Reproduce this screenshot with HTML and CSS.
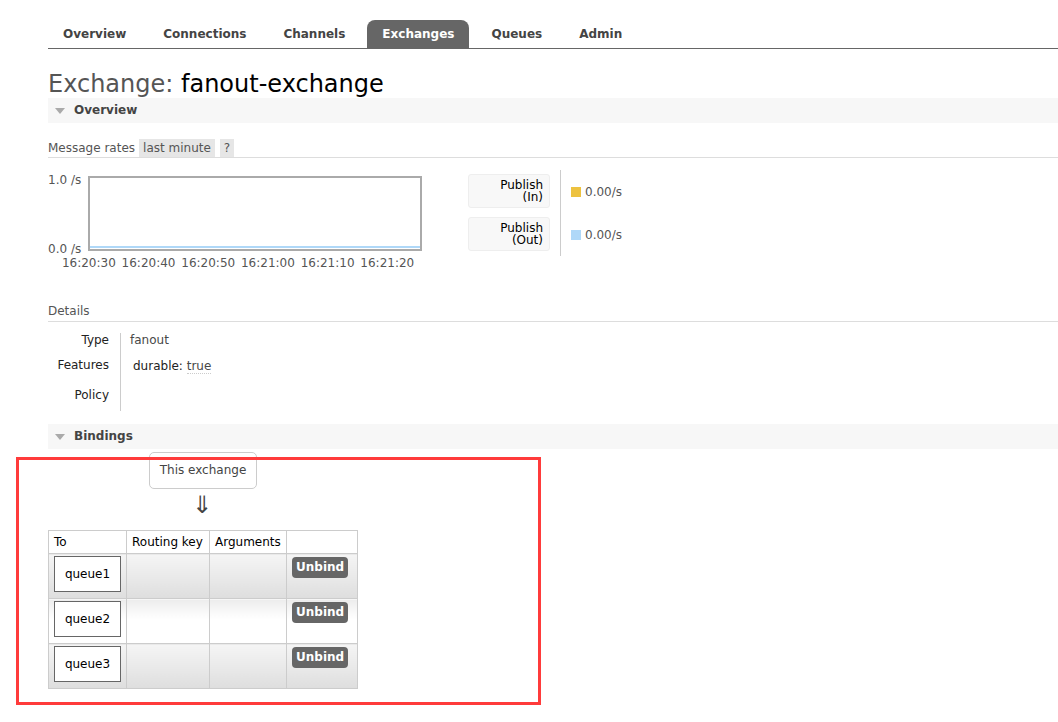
FILE: index.html
```html
<!DOCTYPE html>
<html>
<head>
<meta charset="utf-8">
<link rel="stylesheet" href="styles.css">
</head>
<body>
<div class="page">
  <ul class="tabs">
    <li class="tab">Overview</li>
    <li class="tab">Connections</li>
    <li class="tab">Channels</li>
    <li class="tab active">Exchanges</li>
    <li class="tab">Queues</li>
    <li class="tab">Admin</li>
  </ul>

  <h1 class="title"><span class="title-label">Exchange:</span> <b class="title-name">fanout-exchange</b></h1>

  <div class="section-head"><span class="tri"></span>Overview</div>

  <div class="rates-bar">
    <span class="rates-label">Message rates</span>
    <span class="pill">last minute</span>
    <span class="pill q">?</span>
  </div>

  <div class="chart-row">
    <div class="chart">
      <div class="chart-main">
        <div class="yaxis"><span>1.0 /s</span><span>0.0 /s</span></div>
        <div class="plot"><div class="plot-line"></div></div>
      </div>
      <div class="xaxis">
        <span>16:20:30</span><span>16:20:40</span><span>16:20:50</span><span>16:21:00</span><span>16:21:10</span><span>16:21:20</span>
      </div>
    </div>
    <div class="legend">
      <div class="legend-keys">
        <div class="legend-key">Publish<br>(In)</div>
        <div class="legend-key">Publish<br>(Out)</div>
      </div>
      <div class="legend-vals">
        <div class="legend-val"><span class="swatch in"></span>0.00/s</div>
        <div class="legend-val"><span class="swatch out"></span>0.00/s</div>
      </div>
    </div>
  </div>

  <div class="sub-head">Details</div>
  <table class="facts">
    <tr class="r1"><th>Type</th><td>fanout</td></tr>
    <tr class="r2"><th>Features</th><td><span class="feat-key">durable:</span> <span class="feat-val">true</span></td></tr>
    <tr class="r3"><th>Policy</th><td></td></tr>
  </table>

  <div class="section-head"><span class="tri"></span>Bindings</div>

  <div class="bindings">
    <div class="this-ex">This exchange</div>
    <div class="arrow">⇓</div>
    <table class="list">
      <thead>
        <tr><th class="c1">To</th><th class="c2">Routing key</th><th class="c3">Arguments</th><th class="c4"></th></tr>
      </thead>
      <tbody>
        <tr class="alt1"><td><div class="qbox">queue1</div></td><td></td><td></td><td><span class="btn">Unbind</span></td></tr>
        <tr class="alt2"><td><div class="qbox">queue2</div></td><td></td><td></td><td><span class="btn">Unbind</span></td></tr>
        <tr class="alt1"><td><div class="qbox">queue3</div></td><td></td><td></td><td><span class="btn">Unbind</span></td></tr>
      </tbody>
    </table>
  </div>
</div>
<div class="annot"></div>
</body>
</html>
```

FILE: styles.css
```css
html, body {
  margin: 0;
  padding: 0;
  background: #fff;
}
body {
  font-family: "DejaVu Sans", Verdana, sans-serif;
  font-size: 12px;
  color: #484848;
  overflow: hidden;
  width: 1058px;
  height: 722px;
}
.page {
  padding-left: 48px;
}
.tabs {
  list-style: none;
  margin: 20px 0 0 0;
  padding: 0;
  display: flex;
  gap: 7px;
  border-bottom: 1px solid #666;
}
.tab {
  padding: 0 15px;
  height: 28px;
  line-height: 28px;
  font-weight: bold;
  color: #444;
}
.tab.active {
  background: #666;
  color: #fff;
  border-radius: 8px 8px 0 0;
}
.title {
  margin: 21px 0 0 0;
  font-size: 24px;
  font-weight: normal;
  line-height: 28px;
  height: 28px;
}
.title-label { color: #555; }
.title-name { font-weight: normal; color: #000; }

.section-head {
  background: #f7f7f7;
  height: 25px;
  line-height: 25px;
  font-weight: bold;
  color: #444;
  display: flex;
  align-items: center;
}
.tri {
  width: 0;
  height: 0;
  border-left: 5px solid transparent;
  border-right: 5px solid transparent;
  border-top: 6px solid #aaa;
  margin: 1px 9px 0 7px;
}
.rates-bar {
  margin-top: 16px;
  height: 18px;
  line-height: 19px;
  border-bottom: 1px solid #ddd;
  display: flex;
  color: #555;
}
.rates-label { margin-right: 4px; }
.pill {
  background: #e6e6e6;
  padding: 0 4px;
  margin-right: 5px;
}
.chart-row {
  margin-top: 12px;
  display: flex;
  align-items: flex-start;
}
.chart {
  width: 374px;
}
.chart-main {
  display: flex;
  align-items: flex-start;
  padding-top: 6px;
}
.yaxis {
  width: 40px;
  height: 83px;
  margin-top: -3px;
  display: flex;
  flex-direction: column;
  justify-content: space-between;
  line-height: 14px;
  color: #555;
}
.plot {
  width: 330px;
  height: 71px;
  border: 2px solid #aaa;
  display: flex;
  align-items: flex-end;
}
.plot-line {
  width: 100%;
  height: 2px;
  background: #afd8f8;
  margin-bottom: 1px;
}
.xaxis {
  display: flex;
  margin-left: 11px;
  margin-top: 0;
  line-height: 14px;
  color: #555;
}
.xaxis span {
  width: 59.7px;
  text-align: center;
  flex: none;
}
.legend {
  margin-left: 46px;
  display: flex;
}
.legend-keys {
  display: flex;
  flex-direction: column;
  gap: 9px;
  padding: 4px 10px 5px 0;
  border-right: 1px solid #ccc;
}
.legend-key {
  width: 74px;
  height: 25px;
  padding: 4px 6px 3px 0;
  background: #f8f8f8;
  border: 1px solid #eee;
  border-radius: 3px;
  text-align: right;
  line-height: 12px;
  color: #000;
}
.legend-vals {
  display: flex;
  flex-direction: column;
  gap: 9px;
  padding: 4px 0 5px 10px;
}
.legend-val {
  height: 33px;
  display: flex;
  align-items: center;
  color: #555;
  padding-top: 1px;
}
.swatch {
  width: 10px;
  height: 10px;
  margin-right: 4px;
}
.swatch.in { background: #edc240; }
.swatch.out { background: #afd8f8; }

.sub-head {
  margin-top: 34px;
  line-height: 14px;
  padding-bottom: 3px;
  border-bottom: 1px solid #ddd;
  color: #555;
}
.facts {
  border-collapse: collapse;
  margin-top: 11px;
}
.facts th {
  width: 61px;
  padding: 0 11px 0 0;
  text-align: right;
  font-weight: normal;
  color: #222;
  vertical-align: top;
  line-height: 14px;
}
.facts td {
  border-left: 1px solid #ccc;
  padding: 0 0 0 9px;
  vertical-align: top;
  line-height: 14px;
}
.facts .r1 th, .facts .r1 td { padding-top: 0; height: 20px; }
.facts .r2 th, .facts .r2 td { padding-top: 5px; height: 23px; }
.facts .r3 th, .facts .r3 td { padding-top: 7px; height: 23px; }
.feat-key { color: #222; margin-left: 3px; }
.feat-val {
  display: inline-block;
  margin-top: 2px;
  border-bottom: 1px dotted #ccc;
  line-height: 13px;
}
.facts + .section-head { margin-top: 13px; }

.bindings {
  padding-top: 3px;
}
.this-ex {
  margin-left: 101px;
  width: 106px;
  height: 35px;
  line-height: 35px;
  border: 1px solid #ccc;
  border-radius: 5px;
  text-align: center;
  color: #444;
}
.arrow {
  margin-left: 144px;
  width: 20px;
  text-align: center;
  font-size: 24px;
  line-height: 24px;
  margin-top: 4px;
  color: #444;
}
.list {
  margin-top: 13px;
  border-collapse: collapse;
}
.list th {
  height: 22px;
  padding: 0 5px;
  border: 1px solid #ccc;
  font-weight: normal;
  text-align: left;
  color: #000;
  background: #fff;
}
.list th.c1 { width: 67px; }
.list th.c2 { width: 72px; }
.list th.c3 { width: 66px; }
.list th.c4 { width: 60px; }
.list td {
  border: 1px solid #ccc;
  padding: 2px 5px 5px 5px;
  vertical-align: top;
  height: 37px;
}
.list tr.alt1 td { background: linear-gradient(#f5f5f5, #dedede); }
.list tr.alt2 td { background: linear-gradient(#ececec, #ffffff 45%, #ffffff); }
.qbox {
  width: 65px;
  height: 34px;
  line-height: 34px;
  border: 1px solid #666;
  background: #fff;
  text-align: center;
  color: #000;
}
.btn {
  display: inline-block;
  background: #666;
  color: #fff;
  font-weight: bold;
  padding: 0 4px;
  height: 21px;
  line-height: 21px;
  border-radius: 4px;
  margin-top: 1px;
}
.annot {
  position: absolute;
  left: 16px;
  top: 457px;
  width: 519px;
  height: 242px;
  border: 3px solid #ff3b3b;
}
```
